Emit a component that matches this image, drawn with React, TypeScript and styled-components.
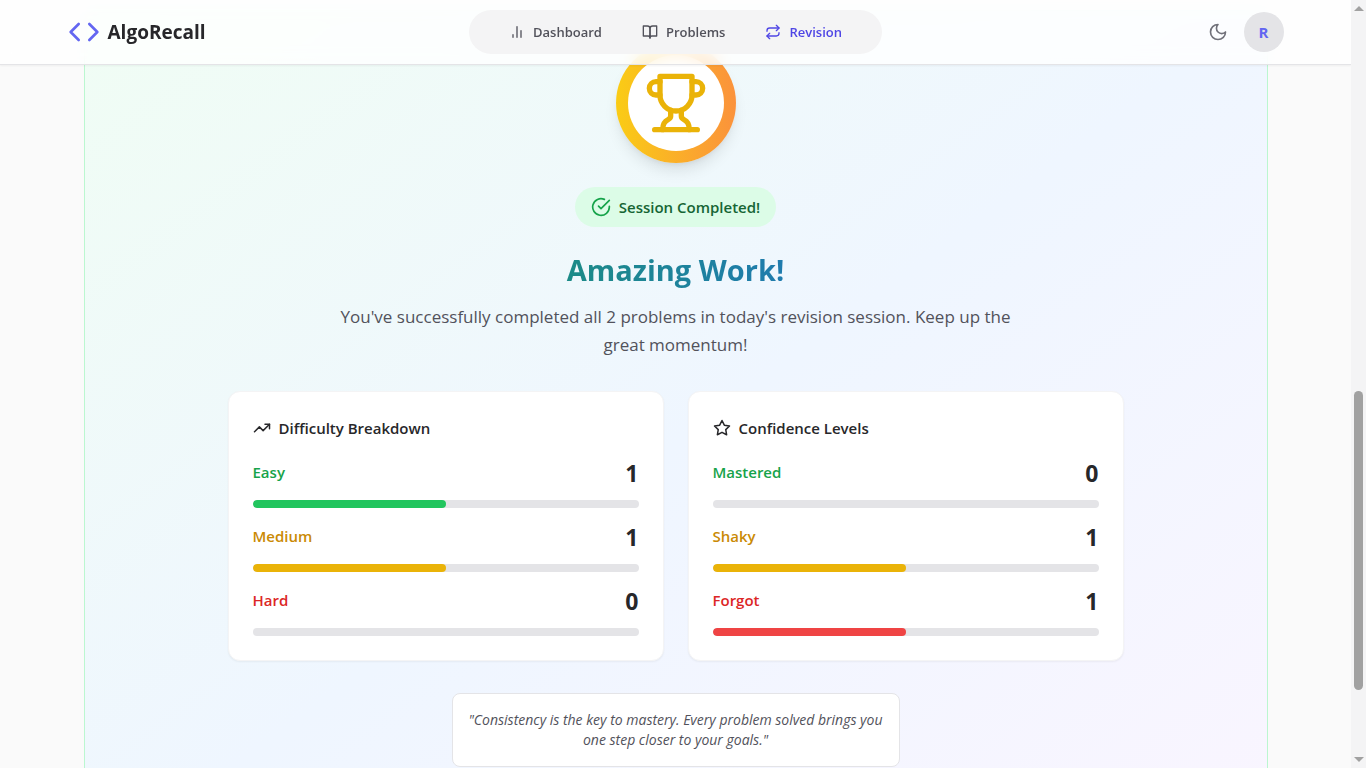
import React from "react";
import styled, { createGlobalStyle } from "styled-components";

const GlobalStyle = createGlobalStyle`
  *, *::before, *::after { box-sizing: border-box; }
  html, body, #root { height: 100%; }
  body {
    margin: 0;
    overflow: hidden;
    background: #fafafa;
    color: #27272a;
    font-family: "Open Sans", "Noto Sans", sans-serif;
    font-size: 15px;
    line-height: 24px;
  }
  h1, h2, p { margin: 0; }
`;

const Shell = styled.div`
  display: flex;
  height: 100vh;
  overflow: hidden;
`;

const Page = styled.div`
  position: relative;
  flex: 1;
  min-width: 0;
  height: 100%;
  overflow: hidden;
`;

const Header = styled.header`
  position: absolute;
  inset: 0 0 auto 0;
  z-index: 10;
  background: rgba(255, 255, 255, 0.8);
  backdrop-filter: blur(8px);
  border-bottom: 1px solid #e4e4e7;
  box-shadow: 0 1px 2px rgba(0, 0, 0, 0.05);
`;

const HeaderInner = styled.div`
  display: grid;
  grid-template-columns: 1fr auto 1fr;
  align-items: center;
  max-width: 1280px;
  height: 64px;
  margin: 0 auto;
  padding: 0 32px;
`;

const Brand = styled.a`
  display: flex;
  align-items: center;
  gap: 8px;
  color: #27272a;
  font-size: 19px;
  font-weight: 700;
  line-height: 28px;
  text-decoration: none;

  svg { color: #6366f1; }
`;

const Nav = styled.nav`
  display: flex;
  align-items: center;
  gap: 8px;
  padding: 4px 24px;
  border-radius: 22px;
  background: #f4f4f5;
`;

const NavLink = styled.a<{ $active?: boolean }>`
  display: flex;
  align-items: center;
  gap: 8px;
  padding: 8px 16px;
  color: ${(p) => (p.$active ? "#4f46e5" : "#52525b")};
  font-size: 13px;
  font-weight: 600;
  line-height: 20px;
  text-decoration: none;
`;

const Actions = styled.div`
  display: flex;
  align-items: center;
  justify-content: flex-end;
  gap: 8px;
`;

const IconButton = styled.button`
  display: flex;
  padding: 8px;
  border: 0;
  background: none;
  color: #71717a;
  cursor: pointer;
`;

const Avatar = styled.button`
  width: 40px;
  height: 40px;
  padding: 0;
  border: 0;
  border-radius: 50%;
  background: #e4e4e7;
  color: #6366f1;
  font: inherit;
  font-weight: 700;
  cursor: pointer;
`;

const Main = styled.main`
  max-width: 1280px;
  margin: 0 auto;
  padding: 10px 48px;
`;

const Panel = styled.section`
  display: flex;
  flex-direction: column;
  align-items: center;
  min-height: 868px;
  padding: 32px;
  border: 1px solid #bbf7d0;
  border-radius: 12px;
  background: linear-gradient(to bottom right, #f0fdf4, #eff6ff, #faf5ff);
  text-align: center;
`;

const TrophyRing = styled.div`
  padding: 12px;
  border-radius: 50%;
  background: linear-gradient(to right, #facc15, #fb923c);
  box-shadow: 0 10px 15px -3px rgba(0, 0, 0, 0.1), 0 4px 6px -4px rgba(0, 0, 0, 0.1);
`;

const TrophyDisc = styled.div`
  display: flex;
  padding: 16px;
  border-radius: 50%;
  background: #fff;
  color: #eab308;
`;

const Badge = styled.div`
  display: flex;
  align-items: center;
  gap: 8px;
  margin-top: 24px;
  padding: 8px 16px;
  border-radius: 20px;
  background: #dcfce7;
  color: #166534;
  font-weight: 600;

  svg { color: #16a34a; }
`;

const Title = styled.h1`
  width: 100%;
  max-width: 896px;
  margin-top: 24px;
  background: linear-gradient(to right, #16a34a, #2563eb);
  background-clip: text;
  color: transparent;
  font-size: 29px;
  font-weight: 700;
  line-height: 38px;
`;

const Lead = styled.p`
  max-width: 690px;
  margin-top: 14px;
  color: #52525b;
  font-size: 17px;
  line-height: 28px;
`;

const Cards = styled.div`
  display: grid;
  grid-template-columns: 1fr 1fr;
  gap: 24px;
  width: 100%;
  max-width: 896px;
  margin-top: 32px;
`;

const Card = styled.section`
  padding: 24px;
  border: 1px solid #f4f4f5;
  border-radius: 12px;
  background: #fff;
  box-shadow: 0 1px 2px rgba(0, 0, 0, 0.05);
  text-align: left;
`;

const CardTitle = styled.h2`
  display: flex;
  align-items: center;
  gap: 8px;
  margin-bottom: 16px;
  font-size: 15px;
  font-weight: 600;
  line-height: 24px;
`;

const Stats = styled.div`
  display: grid;
  gap: 12px;
`;

const StatHead = styled.div`
  display: flex;
  align-items: center;
  justify-content: space-between;
  margin-bottom: 10px;
`;

const StatLabel = styled.span<{ $color: string }>`
  color: ${(p) => p.$color};
  font-weight: 600;
  line-height: 32px;
  align-self: flex-start;
`;

const StatValue = styled.span`
  font-size: 23px;
  font-weight: 700;
  line-height: 34px;
`;

const Track = styled.div`
  height: 8px;
  overflow: hidden;
  border-radius: 4px;
  background: #e4e4e7;
`;

const Fill = styled.div<{ $color: string }>`
  height: 100%;
  border-radius: 4px;
  background: ${(p) => p.$color};
`;

const Quote = styled.p`
  max-width: 448px;
  margin-top: 32px;
  padding: 16px;
  border: 1px solid #e4e4e7;
  border-radius: 8px;
  background: #fff;
  color: #52525b;
  font-size: 14px;
  font-style: italic;
  line-height: 20px;
`;

const ScrollRail = styled.div`
  display: flex;
  flex-direction: column;
  align-items: center;
  width: 15px;
  height: 100%;
  padding: 6px 0;
  background: #f4f4f5;
`;

const RailSpace = styled.div<{ $grow: number }>`
  flex: ${(p) => p.$grow} 0 0;
`;

const Thumb = styled.div`
  flex: 299 0 0;
  width: 9px;
  border-radius: 5px;
  background: #a1a1a1;
`;

const Arrow = styled.div<{ $up?: boolean }>`
  border: 5px solid transparent;
  ${(p) => (p.$up ? "border-top: 0; border-bottom-color: #a1a1a1;" : "border-bottom: 0; border-top-color: #a1a1a1;")}
`;

type IconProps = { size: number; children: React.ReactNode };

const Icon = ({ size, children }: IconProps) => (
  <svg
    width={size}
    height={size}
    viewBox="0 0 24 24"
    fill="none"
    stroke="currentColor"
    strokeWidth={2}
    strokeLinecap="round"
    strokeLinejoin="round"
    aria-hidden="true"
  >
    {children}
  </svg>
);

type Stat = { label: string; value: number; text: string; bar: string };

const TOTAL = 2;

const difficulty: Stat[] = [
  { label: "Easy", value: 1, text: "#16a34a", bar: "#22c55e" },
  { label: "Medium", value: 1, text: "#ca8a04", bar: "#eab308" },
  { label: "Hard", value: 0, text: "#dc2626", bar: "#ef4444" },
];

const confidence: Stat[] = [
  { label: "Mastered", value: 0, text: "#16a34a", bar: "#22c55e" },
  { label: "Shaky", value: 1, text: "#ca8a04", bar: "#eab308" },
  { label: "Forgot", value: 1, text: "#dc2626", bar: "#ef4444" },
];

const StatList = ({ stats }: { stats: Stat[] }) => (
  <Stats>
    {stats.map((s) => (
      <div key={s.label}>
        <StatHead>
          <StatLabel $color={s.text}>{s.label}</StatLabel>
          <StatValue>{s.value}</StatValue>
        </StatHead>
        <Track>
          <Fill $color={s.bar} style={{ width: `${(s.value / TOTAL) * 100}%` }} />
        </Track>
      </div>
    ))}
  </Stats>
);

export default function App() {
  return (
    <Shell>
      <GlobalStyle />
      <Page>
        <Header>
          <HeaderInner>
            <Brand href="#">
              <Icon size={32}>
                <path d="m16 18 6-6-6-6" />
                <path d="m8 6-6 6 6 6" />
              </Icon>
              AlgoRecall
            </Brand>
            <Nav>
              <NavLink href="#dashboard">
                <Icon size={16}>
                  <path d="M12 20V4" />
                  <path d="M18 20V10" />
                  <path d="M6 20v-4" />
                </Icon>
                Dashboard
              </NavLink>
              <NavLink href="#problems">
                <Icon size={16}>
                  <path d="M2 3h6a4 4 0 0 1 4 4v14a3 3 0 0 0-3-3H2z" />
                  <path d="M22 3h-6a4 4 0 0 0-4 4v14a3 3 0 0 1 3-3h7z" />
                </Icon>
                Problems
              </NavLink>
              <NavLink href="#revision" $active>
                <Icon size={16}>
                  <path d="m17 2 4 4-4 4" />
                  <path d="M3 11v-1a4 4 0 0 1 4-4h14" />
                  <path d="m7 22-4-4 4-4" />
                  <path d="M21 13v1a4 4 0 0 1-4 4H3" />
                </Icon>
                Revision
              </NavLink>
            </Nav>
            <Actions>
              <IconButton type="button" aria-label="Toggle theme">
                <Icon size={20}>
                  <path d="M12 3a6 6 0 0 0 9 9 9 9 0 1 1-9-9Z" />
                </Icon>
              </IconButton>
              <Avatar type="button">R</Avatar>
            </Actions>
          </HeaderInner>
        </Header>
        <Main>
          <Panel>
            <TrophyRing>
              <TrophyDisc>
                <Icon size={64}>
                  <path d="M6 9H4.5a2.5 2.5 0 0 1 0-5H6" />
                  <path d="M18 9h1.5a2.5 2.5 0 0 0 0-5H18" />
                  <path d="M4 22h16" />
                  <path d="M10 14.66V17c0 .55-.47.98-.97 1.21C7.85 18.75 7 20.24 7 22" />
                  <path d="M14 14.66V17c0 .55.47.98.97 1.21C16.15 18.75 17 20.24 17 22" />
                  <path d="M18 2H6v7a6 6 0 0 0 12 0V2Z" />
                </Icon>
              </TrophyDisc>
            </TrophyRing>
            <Badge>
              <Icon size={20}>
                <path d="M22 11.08V12a10 10 0 1 1-5.93-9.14" />
                <path d="m9 11 3 3L22 4" />
              </Icon>
              Session Completed!
            </Badge>
            <Title>Amazing Work!</Title>
            <Lead>
              You've successfully completed all 2 problems in today's revision session. Keep up the
              great momentum!
            </Lead>
            <Cards>
              <Card>
                <CardTitle>
                  <Icon size={18}>
                    <path d="M22 7 13.5 15.5l-5-5L2 17" />
                    <path d="M16 7h6v6" />
                  </Icon>
                  Difficulty Breakdown
                </CardTitle>
                <StatList stats={difficulty} />
              </Card>
              <Card>
                <CardTitle>
                  <Icon size={18}>
                    <path d="m12 2 3.09 6.26L22 9.27l-5 4.87 1.18 6.88L12 17.77l-6.18 3.25L7 14.14 2 9.27l6.91-1.01z" />
                  </Icon>
                  Confidence Levels
                </CardTitle>
                <StatList stats={confidence} />
              </Card>
            </Cards>
            <Quote>
              "Consistency is the key to mastery. Every problem solved brings you one step closer to
              your goals."
            </Quote>
          </Panel>
        </Main>
      </Page>
      <ScrollRail aria-hidden="true">
        <Arrow $up />
        <RailSpace $grow={380} />
        <Thumb />
        <RailSpace $grow={67} />
        <Arrow />
      </ScrollRail>
    </Shell>
  );
}
